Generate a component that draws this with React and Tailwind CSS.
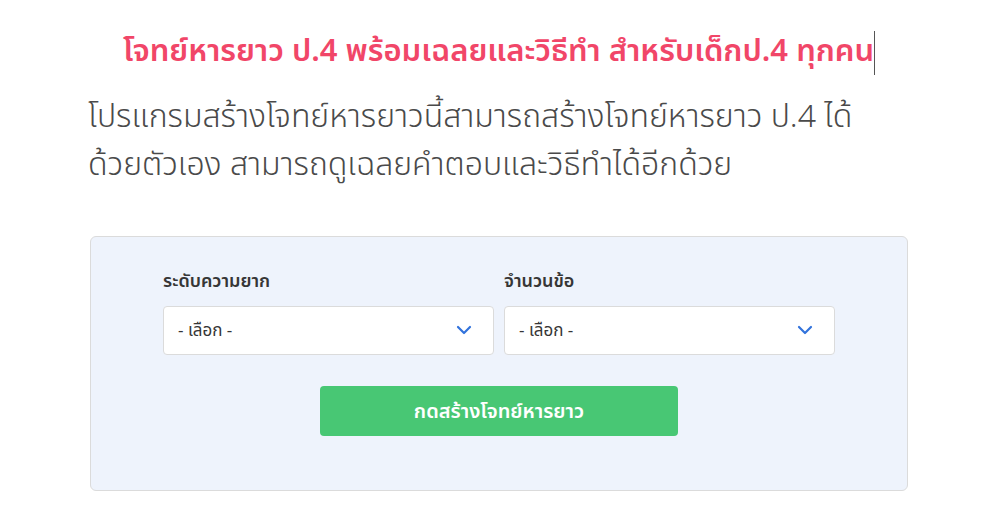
import React from 'react';

const font = { fontFamily: '"Noto Sans", "Noto Sans Thai", sans-serif' };

function Chevron() {
  return <svg width="18" height="18" viewBox="0 0 18 18" fill="none">
      <path d="M3 6 L9 12 L15 6" stroke="#3273dc" strokeWidth="2.2" strokeLinecap="round" strokeLinejoin="round" />
    </svg>;
}

function SelectBox({ label }) {
  return <div className="flex-1 flex flex-col">
      <label className="text-[18px] font-semibold text-[#363636] mb-[11px] leading-[30px]">{label}</label>
      <div className="h-[49px] bg-white border border-[#dbdbdb] rounded-[4px] flex items-center justify-between pl-[14px] pr-[20px]">
        <span className="text-[17px] text-[#363636]">- เลือก -</span>
        <Chevron />
      </div>
    </div>;
}

export default function App() {
  return <div className="w-[1000px] h-[525px] bg-white overflow-hidden" style={font}>
      <div className="w-[818px] ml-[90px] pt-[24px]">
        {/* หัวข้อ */}
        <h1 className="text-center text-[31px] font-semibold text-[#f14668] leading-[50px]">
          โจทย์หารยาว ป.4 พร้อมเฉลยและวิธีทำ สำหรับเด็กป.4 ทุกคน<span className="inline-block w-[1px] h-[44px] bg-[#555] align-middle"></span>
        </h1>
        <p className="text-[32px] font-light text-[#4a4a4a] leading-[48px] mt-[16px] -ml-[2px]">
          โปรแกรมสร้างโจทย์หารยาวนี้สามารถสร้างโจทย์หารยาว ป.4 ได้<br />ด้วยตัวเอง สามารถดูเฉลยคำตอบและวิธีทำได้อีกด้วย
        </p>

        {/* แบบฟอร์ม */}
        <div className="mt-[49px] h-[255px] bg-[#eef3fc] border border-[#dbdbdb] rounded-[6px] px-[72px] pt-[28px]">
          <div className="flex gap-[10px]">
            <SelectBox label="ระดับความยาก" />
            <SelectBox label="จำนวนข้อ" />
          </div>
          <div className="flex justify-center mt-[31px]">
            <button className="w-[358px] h-[50px] bg-[#48c774] rounded-[4px] text-white text-[20px] font-semibold">กดสร้างโจทย์หารยาว</button>
          </div>
        </div>
      </div>
    </div>;
}
